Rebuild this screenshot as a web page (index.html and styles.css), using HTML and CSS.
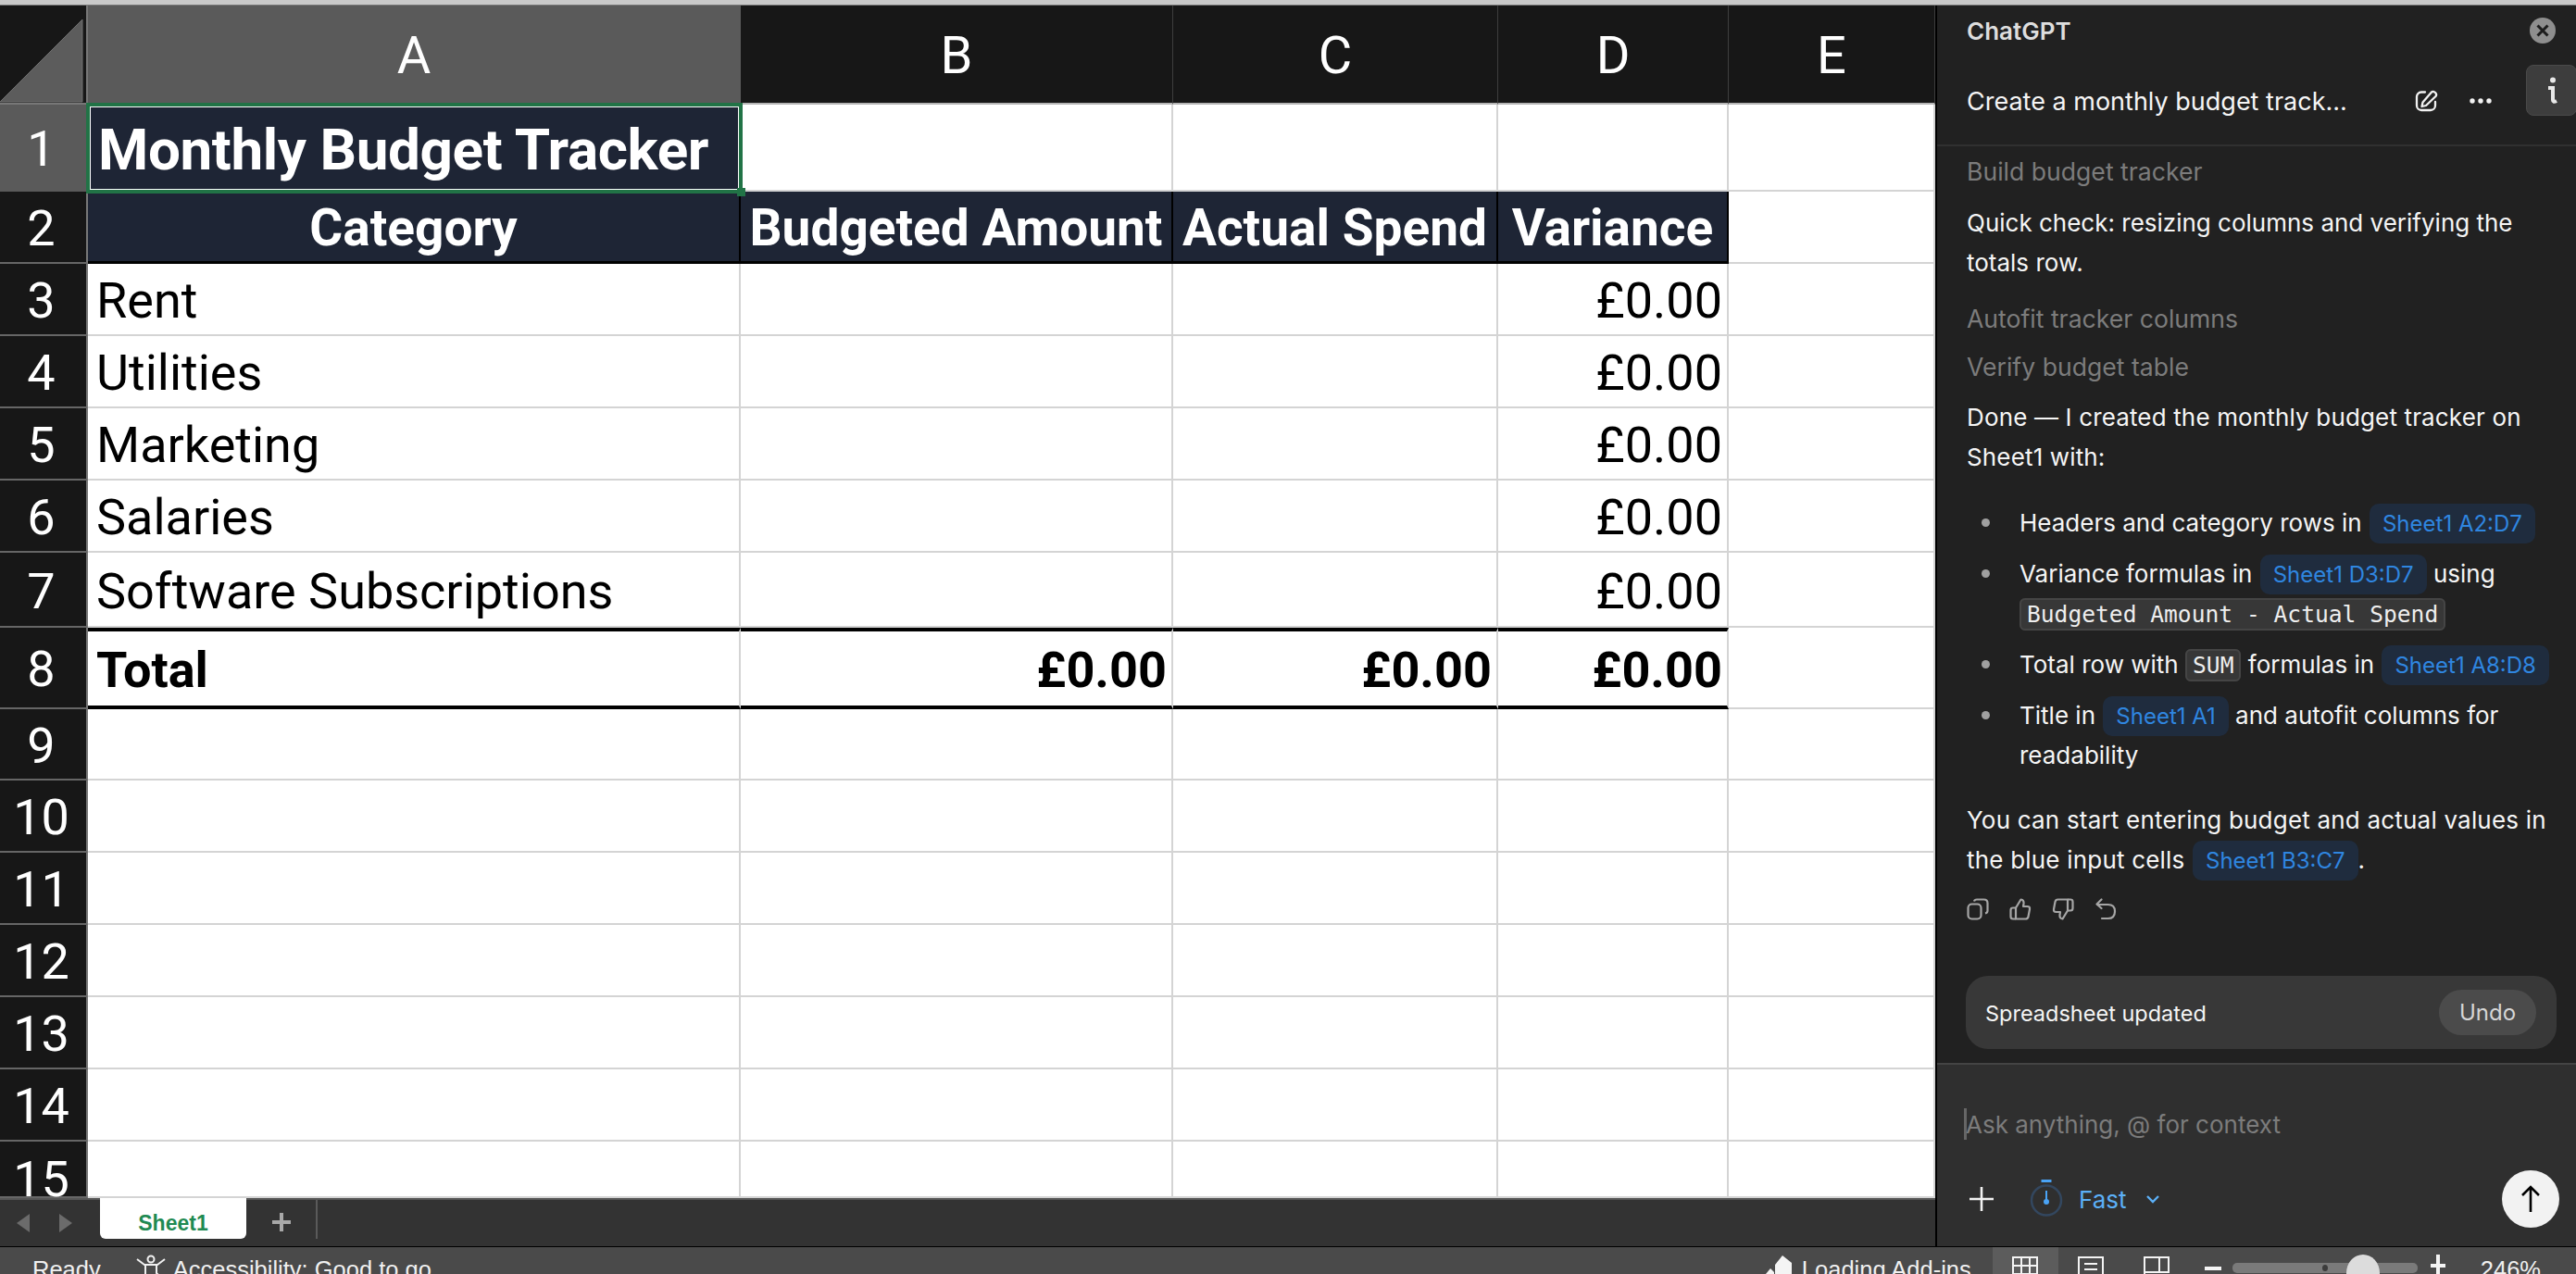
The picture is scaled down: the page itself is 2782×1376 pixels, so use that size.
FILE: index.html
```html
<!DOCTYPE html>
<html lang="en">
<head>
<meta charset="utf-8">
<title>Monthly Budget Tracker</title>
<link rel="stylesheet" href="styles.css">
</head>
<body>
<div class="topline"></div>
<div class="workspace">
  <main class="sheet-area">
    <div class="sheet">
      <div class="corner"><svg viewBox="0 0 95 107" width="95" height="107"><path d="M0 104 89 15V104Z" fill="#5c5c5c" stroke="#6e6e6e" stroke-width="1"/></svg></div>
      <div class="col sel">A</div><div class="col">B</div><div class="col">C</div><div class="col">D</div><div class="col">E</div>

      <div class="rh sel">1</div><div class="c title"><span>Monthly Budget Tracker</span><i class="handle"></i></div><div class="c"></div><div class="c"></div><div class="c"></div><div class="c"></div>

      <div class="rh">2</div><div class="c head">Category</div><div class="c head">Budgeted Amount</div><div class="c head">Actual Spend</div><div class="c head">Variance</div><div class="c"></div>

      <div class="rh">3</div><div class="c txt">Rent</div><div class="c"></div><div class="c"></div><div class="c num">£0.00</div><div class="c"></div>
      <div class="rh">4</div><div class="c txt">Utilities</div><div class="c"></div><div class="c"></div><div class="c num">£0.00</div><div class="c"></div>
      <div class="rh">5</div><div class="c txt">Marketing</div><div class="c"></div><div class="c"></div><div class="c num">£0.00</div><div class="c"></div>
      <div class="rh">6</div><div class="c txt">Salaries</div><div class="c"></div><div class="c"></div><div class="c num">£0.00</div><div class="c"></div>
      <div class="rh">7</div><div class="c txt">Software Subscriptions</div><div class="c"></div><div class="c"></div><div class="c num">£0.00</div><div class="c"></div>

      <div class="rh">8</div><div class="c txt total">Total</div><div class="c num total">£0.00</div><div class="c num total">£0.00</div><div class="c num total">£0.00</div><div class="c"></div>

      <div class="rh">9</div><div class="c"></div><div class="c"></div><div class="c"></div><div class="c"></div><div class="c"></div>
      <div class="rh">10</div><div class="c"></div><div class="c"></div><div class="c"></div><div class="c"></div><div class="c"></div>
      <div class="rh">11</div><div class="c"></div><div class="c"></div><div class="c"></div><div class="c"></div><div class="c"></div>
      <div class="rh">12</div><div class="c"></div><div class="c"></div><div class="c"></div><div class="c"></div><div class="c"></div>
      <div class="rh">13</div><div class="c"></div><div class="c"></div><div class="c"></div><div class="c"></div><div class="c"></div>
      <div class="rh">14</div><div class="c"></div><div class="c"></div><div class="c"></div><div class="c"></div><div class="c"></div>
      <div class="rh r15">15</div><div class="c"></div><div class="c"></div><div class="c"></div><div class="c"></div><div class="c"></div>
    </div>
    <div class="tabs">
      <div class="nav">
        <svg width="14" height="20" viewBox="0 0 14 20"><path d="M14 0V20L0 10Z" fill="#6b6b6b"/></svg>
        <svg width="14" height="20" viewBox="0 0 14 20"><path d="M0 0V20L14 10Z" fill="#6b6b6b"/></svg>
      </div>
      <div class="tab">Sheet1</div>
      <div class="addtab"><svg width="22" height="22" viewBox="0 0 22 22"><path d="M11 1V21M1 11H21" stroke="#a8a8a8" stroke-width="4"/></svg></div>
    </div>
  </main>

  <aside class="panel">
    <header class="p-top">
      <span class="brand">ChatGPT</span>
      <svg class="close" width="28" height="28" viewBox="0 0 28 28"><circle cx="14" cy="14" r="14" fill="#8e8e8e"/><path d="M8.5 8.5 19.5 19.5M19.5 8.5 8.5 19.5" stroke="#1c1c1c" stroke-width="3"/></svg>
    </header>
    <div class="p-title">
      <span class="conv">Create a monthly budget track...</span>
      <svg class="edit" width="26" height="24" viewBox="0 0 26 24" fill="none" stroke="#f2f2f2" stroke-width="2.300" stroke-linecap="round" stroke-linejoin="round"><path d="M11 2.500H7a5 5 0 0 0-5 5V17a5 5 0 0 0 5 5H17a5 5 0 0 0 5-5V13"/><path d="M18 2.500Q20 1 22 3T22.500 7L12 17 7.500 18 8.500 13.500Z"/></svg>
      <svg class="dots" width="26" height="8" viewBox="0 0 26 8" fill="#f2f2f2"><circle cx="4" cy="4" r="2.700"/><circle cx="13" cy="4" r="2.700"/><circle cx="22" cy="4" r="2.700"/></svg>
    </div>
    <div class="info"><svg width="14" height="30" viewBox="0 0 14 30"><circle cx="8" cy="3.500" r="3" fill="#e8e8e8"/><path d="M3 12H8V25Q8 28 12 26" fill="none" stroke="#e8e8e8" stroke-width="4"/></svg></div>

    <section class="messages">
      <p class="muted m-build">Build budget tracker</p>
      <p class="m-quick">Quick check: resizing columns and verifying the totals row.</p>
      <p class="muted m-autofit">Autofit tracker columns</p>
      <p class="muted m-verify">Verify budget table</p>
      <p class="m-done">Done — I created the monthly budget tracker on Sheet1 with:</p>
      <ul>
        <li>Headers and category rows in <a class="chip">Sheet1 A2:D7</a></li>
        <li>Variance formulas in <a class="chip">Sheet1 D3:D7</a> using <code>Budgeted Amount - Actual Spend</code></li>
        <li>Total row with <code>SUM</code> formulas in <a class="chip">Sheet1 A8:D8</a></li>
        <li>Title in <a class="chip">Sheet1 A1</a> and autofit columns for readability</li>
      </ul>
      <p class="m-end">You can start entering budget and actual values in the blue input cells <a class="chip">Sheet1 B3:C7</a>.</p>
      <div class="actions">
        <svg width="24" height="24" viewBox="0 0 24 24" fill="none" stroke="#a6a6a6" stroke-width="2.200" stroke-linejoin="round"><rect x="1.500" y="6.500" width="14" height="16" rx="4"/><path d="M8 3.500Q8.500 1.500 11 1.500H18.500Q22.500 1.500 22.500 5.500V13.500Q22.500 16 20 16.500"/></svg>
        <svg width="24" height="24" viewBox="0 0 24 24" fill="none" stroke="#a6a6a6" stroke-width="2.200" stroke-linejoin="round"><path d="M7 10.500 12.500 1.500Q16 2 15.500 6L15 9H19.500Q22.500 9 22 12L20.500 20Q20 22.500 17.500 22.500H7Z"/><path d="M7 10.500H4Q1.500 10.500 1.500 13V20Q1.500 22.500 4 22.500H7"/></svg>
        <svg width="24" height="24" viewBox="0 0 24 24" fill="none" stroke="#a6a6a6" stroke-width="2.200" stroke-linejoin="round"><path d="M17 13.500 11.500 22.500Q8 22 8.500 18L9 15H4.500Q1.500 15 2 12L3.500 4Q4 1.500 6.500 1.500H17Z"/><path d="M17 13.500H20Q22.500 13.500 22.500 11V4Q22.500 1.500 20 1.500H17"/></svg>
        <svg width="24" height="24" viewBox="0 0 24 24" fill="none" stroke="#a6a6a6" stroke-width="2.200" stroke-linecap="round" stroke-linejoin="round"><path d="M7.500 1.500 2.500 6.500 7.500 11"/><path d="M3 7H14.500Q22 7 22 14.500T14.500 22H8"/></svg>
      </div>
    </section>

    <div class="updated">
      <span>Spreadsheet updated</span>
      <button class="undo" type="button">Undo</button>
    </div>

    <form class="composer">
      <div class="prompt"><i class="caret"></i>Ask anything, @ for context</div>
      <div class="tools">
        <svg class="plus" width="28" height="28" viewBox="0 0 28 28"><path d="M14 1V27M1 14H27" stroke="#f2f2f2" stroke-width="2.600"/></svg>
        <svg class="watch" width="36" height="40" viewBox="0 0 36 40" fill="none"><path d="M12.500 1.500H23.500" stroke="#4aa3f5" stroke-width="3"/><circle cx="18" cy="22.500" r="16" stroke="#33475f" stroke-width="2.500"/><path d="M18 12V23" stroke="#4aa3f5" stroke-width="2"/><circle cx="18" cy="24" r="3" fill="#4aa3f5"/></svg>
        <span class="fast">Fast</span>
        <svg class="chev" width="16" height="10" viewBox="0 0 16 10" fill="none"><path d="M2 2 8 8 14 2" stroke="#5cb0f7" stroke-width="2.400"/></svg>
        <button class="send" type="button"><svg width="24" height="30" viewBox="0 0 24 30" fill="none"><path d="M12 29V2M3 11 12 2 21 11" stroke="#000" stroke-width="2.600"/></svg></button>
      </div>
    </form>
  </aside>
</div>

<footer class="status">
  <span class="s-ready">Ready</span>
  <svg class="s-acc" width="34" height="29" viewBox="0 0 34 29" fill="none" stroke="#f0f0f0" stroke-width="2"><circle cx="17" cy="5" r="3.500"/><path d="M2 5 10 11H24L32 5M11 11V29M23 11V20L30 27"/></svg>
  <span class="s-acc-text">Accessibility: Good to go</span>
  <svg class="s-load" width="30" height="29" viewBox="0 0 30 29" fill="#f4f4f4"><path d="M10 12 18 2 28 10V29H10Z"/><path d="M0 22 5 16 9 20V29H0Z"/></svg>
  <span class="s-load-text">Loading Add-ins</span>
  <span class="view active"><svg width="28" height="29" viewBox="0 0 28 29" fill="none" stroke="#f4f4f4" stroke-width="2"><path d="M1 1H27V30H1ZM1 10H27M1 19H27M10 1V30M19 1V30"/></svg></span>
  <span class="view"><svg width="28" height="29" viewBox="0 0 28 29" fill="none" stroke="#f4f4f4" stroke-width="2"><path d="M1 30V1H27V30M7 8H21M7 14H21M7 20H21M7 26H21"/></svg></span>
  <span class="view"><svg width="28" height="29" viewBox="0 0 28 29" fill="none" stroke="#f4f4f4" stroke-width="2"><path d="M1 30V1H27V17H1M17 1V17"/></svg></span>
  <span class="minus"></span>
  <span class="slider"><i class="notch"></i><i class="thumb"></i></span>
  <svg class="zplus" width="16" height="29" viewBox="0 0 16 29"><path d="M8 8V29M0 20H16" stroke="#f4f4f4" stroke-width="4"/></svg>
  <span class="zoomval">246%</span>
</footer>
</body>
</html>
```

FILE: styles.css
```css
* { box-sizing: border-box; }
html, body { margin: 0; height: 1376px; overflow: hidden; background: #212121; }
body { display: flex; flex-direction: column; font-family: Inter, "Liberation Sans", sans-serif; }
.topline { height: 6px; flex: none; background: #c9c9c9; border-bottom: 1px solid #777; }
.workspace { flex: 1; display: flex; min-height: 0; }

/* sheet */
.sheet-area { width: 2092px; flex: none; display: flex; flex-direction: column; border-right: 2px solid #000; }
.sheet {
  flex: none; height: 1288px; overflow: hidden; display: grid; background: #fff;
  grid-template-columns: 95px 705px 467px 351px 249px 223px;
  grid-template-rows: 107px 94px repeat(5, 78px) 81px 88px 77px repeat(5, 78px) 61px;
  font-family: Roboto, "Noto Sans", sans-serif;
}
.corner { background: #171717; border-right: 2px solid #777; border-bottom: 2px solid #777; overflow: hidden; }
.corner svg { display: block; }
.col { background: #171717; color: #fff; font-size: 56px; padding-top: 2px; display: flex; align-items: center; justify-content: center; border-right: 1px solid #3e3e3e; border-bottom: 2px solid #b5b5b5; }
.rh { background: #171717; color: #fff; font-size: 54px; padding: 3px 4px 0 0; display: flex; align-items: center; justify-content: center; border-right: 2px solid #777; border-bottom: 2px solid #666; }
.rh.r15 { align-items: flex-start; padding-top: 9px; }
.col.sel, .rh.sel { background: #5a5a5a; border-color: #5a5a5a; }
.c { background: #fff; border-right: 2px solid #d4d4d4; border-bottom: 2px solid #d4d4d4; color: #000; font-size: 54px; padding-top: 3px; display: flex; align-items: center; white-space: nowrap; position: relative; min-width: 0; }
.title { background: #1e2535; color: #fff; font-weight: 700; font-size: 62px; letter-spacing: -0.400px; padding: 3px 0 0 11px; outline: 4px solid #217346; outline-offset: -2px; box-shadow: inset 0 0 0 3px #fff; z-index: 2; border: 0; }
.handle { position: absolute; right: -5px; bottom: -5px; width: 9px; height: 9px; background: #217346; border: 0; }
.head { background: #1e2535; color: #fff; font-weight: 700; font-size: 55px; padding-top: 2px; justify-content: center; border-right-color: #000; border-bottom: 3px solid #000; }
.txt { padding-left: 9px; }
.num { justify-content: flex-end; padding-right: 5px; }
.total { font-weight: 700; border-top: 4px solid #000; border-bottom: 4px solid #000; }

/* tabs */
.tabs { flex: 1; display: flex; background: #333; border-top: 2px solid #565656; }
.nav { width: 108px; display: flex; align-items: center; justify-content: center; gap: 32px; padding-right: 12px; }
.tab { width: 158px; height: 44px; margin-top: -2px; padding-top: 10px; background: #fff; color: #1f8a52; font: 700 23px "Liberation Sans", sans-serif; display: flex; align-items: center; justify-content: center; border-radius: 0 0 6px 6px; }
.addtab { width: 77px; height: 42px; padding-top: 6px; display: flex; align-items: center; justify-content: center; border-right: 2px solid #5a5a5a; }

/* panel */
.panel { flex: 1; min-width: 0; display: flex; flex-direction: column; background: #212121; color: #f5f5f5; position: relative; font-size: 26px; line-height: 43px; }
.p-top { height: 54px; flex: none; display: flex; align-items: center; justify-content: space-between; padding: 0 22px 0 32px; }
.brand { font-weight: 600; font-size: 26px; color: #dedede; }
.p-title { height: 98px; flex: none; display: flex; align-items: center; padding: 2px 0 0 32px; border-bottom: 2px solid #303030; }
.conv { width: 484px; font-size: 27px; }
.edit { margin-right: 32px; }
.info { position: absolute; right: -1px; top: 64px; width: 55px; height: 55px; border-radius: 8px; background: #3d3d3d; border: 1px solid #4a4a4a; display: flex; align-items: center; justify-content: center; }

.messages { flex: 1; min-height: 0; padding: 6px 20px 0 32px; }
.messages p { margin: 0; }
.messages .muted { color: #7c7c7c; font-size: 26.600px; }
.messages .m-quick { margin-top: 12px; }
.messages .m-autofit { margin-top: 18px; }
.messages .m-verify { margin-top: 9px; }
.messages .m-done { margin-top: 11px; letter-spacing: 0.150px; }
ul { margin: 28px 0 0; padding: 0 0 0 57px; list-style: none; }
li { margin-bottom: 12px; position: relative; }
li::before { content: ""; position: absolute; left: -41px; top: 17px; width: 9px; height: 9px; border-radius: 50%; background: #a0a0a0; }
.messages .m-end { margin-top: 27px; letter-spacing: 0.200px; }
.chip { background: #1f2c3e; color: #2f86e0; font-size: 24px; line-height: 1; letter-spacing: 0; padding: 7px 14px; border-radius: 10px; margin: 0 0 0 1px; }
code { font-family: "DejaVu Sans Mono", "Liberation Mono", monospace; font-size: 24.600px; line-height: 1; background: #373737; border: 2px solid #454545; border-radius: 6px; padding: 1px 6px; color: #eee; }
.actions { display: flex; gap: 22px; margin-top: 20px; }

.updated { flex: none; height: 79px; margin: 0 21px 15px 31px; background: #383838; border-radius: 24px; display: flex; align-items: center; justify-content: space-between; padding: 2px 22px 0 21px; font-size: 23.500px; }
.undo { width: 105px; height: 49px; margin-top: -2px; border: 0; border-radius: 25px; background: #4b4b4b; color: #d6d6d6; font: 24px Inter, sans-serif; }

.composer { flex: none; height: 198px; background: #2f2f2f; border-top: 2px solid #444; padding: 0 18px 0 31px; margin: 0; }
.prompt { height: 114px; display: flex; align-items: center; color: #7c7c7c; padding-top: 14px; margin-left: -2px; }
.caret { width: 3px; height: 34px; background: #666; margin-right: -1px; }
.tools { display: flex; align-items: center; height: 62px; }
.plus { margin: 0 0 0 3px; }
.watch { margin-left: 38px; margin-bottom: 2px; }
.fast { color: #5cb0f7; margin-left: 17px; }
.chev { margin-left: 20px; }
.send { margin-left: auto; width: 62px; height: 62px; border-radius: 50%; background: #f2f2f2; border: 0; display: flex; align-items: center; justify-content: center; padding: 0; }

/* status */
.status { height: 30px; flex: none; background: #4a4a4a; border-top: 1px solid #000; display: flex; align-items: flex-start; color: #f0f0f0; font: 25.500px/30px "Liberation Sans", sans-serif; position: relative; overflow: hidden; }
.status span { padding-top: 9px; }
.s-ready { margin-left: 35px; }
.s-acc { margin-left: 37px; margin-top: 8px; }
.s-acc-text { margin-left: 7px; }
.s-load { margin-left: auto; margin-top: 7px; }
.s-load-text { margin-left: 9px; margin-right: 23px; }
.status .view { width: 71px; height: 30px; padding: 10px 0 0; display: flex; justify-content: center; }
.status .view.active { background: #5c5c5c; }
.status .minus { width: 18px; height: 4px; background: #f4f4f4; padding: 0; margin: 21px 0 0 16px; }
.status .slider { width: 200px; height: 11px; margin: 17px 0 0 12px; padding: 0; background: #7a7a7a; border-radius: 5px; position: relative; }
.notch { position: absolute; left: 97px; top: 2px; width: 6px; height: 7px; border-radius: 50%; background: #3c3c3c; }
.thumb { position: absolute; left: 123px; top: -9px; width: 36px; height: 40px; border-radius: 50%; background: #dcdcdc; }
.zplus { margin-left: 14px; }
.zoomval { margin-left: 38px; margin-right: 38px; }
```
